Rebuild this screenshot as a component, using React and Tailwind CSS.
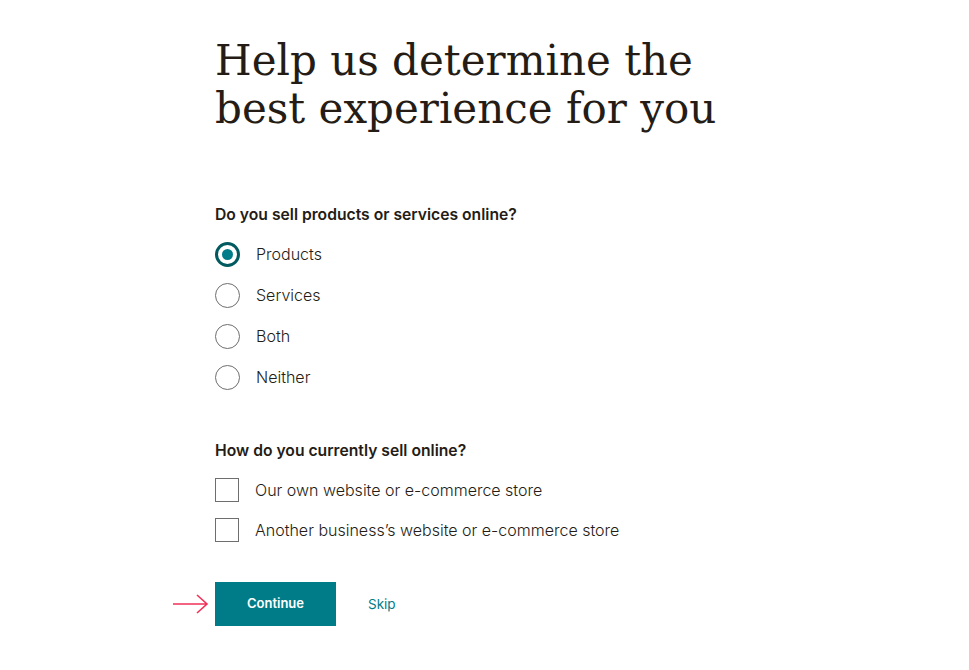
import React, { useState } from "react";

const sans = { fontFamily: 'Inter, "Liberation Sans", Arial, sans-serif' };

function Radio({ label, checked, onClick }) {
  return (
    <div className="flex items-center h-[41px] cursor-pointer" onClick={onClick}>
      {checked ? (
        <span className="w-[25px] h-[25px] rounded-full border-[3px] border-[#005a5f] flex items-center justify-center">
          <span className="w-[11px] h-[11px] rounded-full bg-[#007c89]" />
        </span>
      ) : (
        <span className="w-[25px] h-[25px] rounded-full border border-[#6e6e6e]" />
      )}
      <span className="ml-[16px] text-[16px] font-light text-[#241c15]">{label}</span>
    </div>
  );
}

function Check({ label }) {
  return (
    <div className="flex items-center h-[40px]">
      <span className="w-[24px] h-[24px] border border-[#6e6e6e]" />
      <span className="ml-[16px] text-[16px] font-light text-[#241c15]">{label}</span>
    </div>
  );
}

export default function App() {
  const [sel, setSel] = useState("Products");
  return (
    <div className="w-[969px] h-[670px] bg-white" style={sans}>
      <div className="pl-[215px] pt-[37px]">
        <h1
          className="text-[42px] leading-[48px] text-[#241c15] font-normal"
          style={{ fontFamily: '"DejaVu Serif", "Liberation Serif", serif' }}
        >
          Help us determine the
          <br />
          best experience for you
        </h1>
        <div className="mt-[70px] text-[15.7px] font-semibold text-[#241c15]">
          Do you sell products or services online?
        </div>
        <div className="mt-[7px]">
          {["Products", "Services", "Both", "Neither"].map((o) => (
            <Radio key={o} label={o} checked={sel === o} onClick={() => setSel(o)} />
          ))}
        </div>
        <div className="mt-[41px] text-[15.7px] font-semibold text-[#241c15]">
          How do you currently sell online?
        </div>
        <div className="mt-[8px]">
          <Check label="Our own website or e-commerce store" />
          <Check label="Another business’s website or e-commerce store" />
        </div>
        <div className="mt-[32px] flex items-center relative">
          <svg
            className="absolute left-[-43px] top-[12px]"
            width="38"
            height="20"
            viewBox="0 0 38 20"
            fill="none"
            stroke="#f2305a"
            strokeWidth="1.6"
          >
            <path d="M1 10 H35 M25 1 L35 10 L25 19" />
          </svg>
          <button className="w-[121px] h-[44px] bg-[#007c89] text-white text-[13px] font-semibold">
            Continue
          </button>
          <span className="ml-[32px] text-[13.5px] text-[#007c89]">Skip</span>
        </div>
      </div>
    </div>
  );
}
